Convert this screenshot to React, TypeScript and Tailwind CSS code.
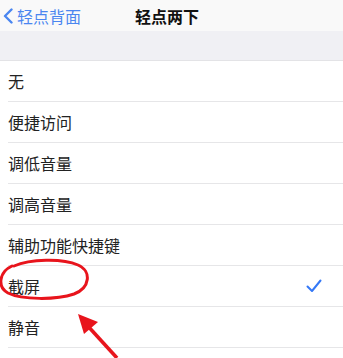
import React from "react";

const OPTIONS = ["无", "便捷访问", "调低音量", "调高音量", "辅助功能快捷键", "截屏", "静音", ""];
const SELECTED = "截屏";

export default function App() {
  return (
    <div
      className="relative w-[343px] h-[358px] overflow-hidden bg-white"
      style={{ fontFamily: '"Noto Sans CJK SC", "Noto Sans", sans-serif' }}
    >
      {/* nav bar */}
      <div className="flex h-[31px] items-center bg-[#f9f9f9]">
        <div className="flex w-[135px] items-center pl-[3px] text-[16px] text-[#4a86f0]">
          <svg width="10" height="16" viewBox="0 0 10 16" className="mr-[4px]">
            <path d="M8.5 1.5 L2 8 L8.5 14.5" fill="none" stroke="#4a86f0" strokeWidth="2.4" strokeLinecap="round" strokeLinejoin="round" />
          </svg>
          <span className="leading-none">轻点背面</span>
        </div>
        <div className="text-[16px] font-semibold leading-none text-[#111]">轻点两下</div>
      </div>

      {/* grouped spacer */}
      <div className="h-[30px] border-b border-[#e3e3e6] bg-[#f0f0f4]" />

      {/* options */}
      <div className="pl-2">
        {OPTIONS.map((label, i) => (
          <div
            key={i}
            className="flex h-[41px] items-center justify-between border-b border-[#e6e6e8] pr-[21px] text-[16px] text-[#222]"
          >
            <span className="leading-none">{label}</span>
            {label === SELECTED && (
              <svg width="16" height="14" viewBox="0 0 16 14">
                <path d="M1.5 7.5 L6 12 L14.5 1.5" fill="none" stroke="#3478f6" strokeWidth="2" strokeLinecap="round" strokeLinejoin="round" />
              </svg>
            )}
          </div>
        ))}
      </div>

      {/* red annotation */}
      <svg className="pointer-events-none absolute left-0 top-0" width="343" height="358" viewBox="0 0 343 358">
        <path
          d="M14 266 C 30 259, 62 258, 78 265 C 92 271, 90 288, 74 294 C 56 300, 22 300, 8 293 C -3 287, -1 272, 12 266"
          fill="none"
          stroke="#e8141c"
          strokeWidth="3"
          strokeLinecap="round"
        />
        <line x1="117" y1="358" x2="86" y2="324" stroke="#e8141c" strokeWidth="3.6" />
        <polygon points="78,314 98,322 84,334" fill="#e8141c" />
      </svg>
    </div>
  );
}
